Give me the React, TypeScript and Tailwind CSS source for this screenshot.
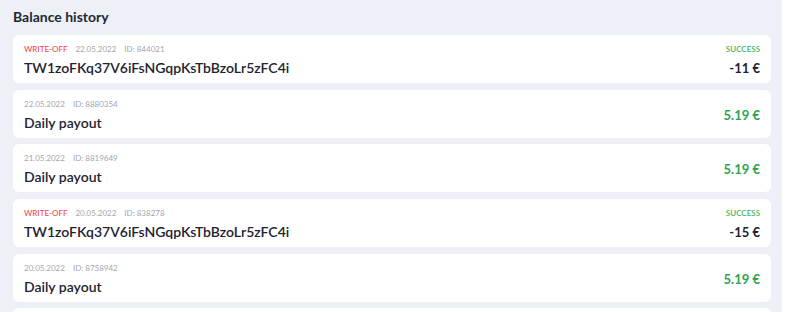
type Entry = {
  id: string
  date: string
  title: string
  amount: string
  writeOff?: boolean
}

const entries: Entry[] = [
  { id: '844021', date: '22.05.2022', title: 'TW1zoFKq37V6iFsNGqpKsTbBzoLr5zFC4i', amount: '-11 €', writeOff: true },
  { id: '8880354', date: '22.05.2022', title: 'Daily payout', amount: '5.19 €' },
  { id: '8819649', date: '21.05.2022', title: 'Daily payout', amount: '5.19 €' },
  { id: '838278', date: '20.05.2022', title: 'TW1zoFKq37V6iFsNGqpKsTbBzoLr5zFC4i', amount: '-15 €', writeOff: true },
  { id: '8758942', date: '20.05.2022', title: 'Daily payout', amount: '5.19 €' },
]

export default function App() {
  return (
    <div className="h-[312px] w-[787px] overflow-hidden bg-white font-['Lato','Noto_Sans',sans-serif]">
      <div className="h-full w-[782px] bg-[#edf0f7] px-[13px] pt-[8px]">
        {/* ── Header ── */}
        <h2 className="text-[14px] leading-[18px] font-bold text-[#222831]">Balance history</h2>

        {/* ── List ── */}
        <ul className="mt-[9px] flex w-[758px] flex-col gap-[6.7px]">
          {entries.map((e) => (
            <li key={e.id}>
              <HistoryRow entry={e} />
            </li>
          ))}
          {/* next row, scrolled below the fold */}
          <li className="h-[48px] rounded-[6px] bg-white" />
        </ul>
      </div>
    </div>
  )
}

function HistoryRow({ entry }: { entry: Entry }) {
  return (
    <div className="flex h-[48px] items-center justify-between rounded-[6px] bg-white px-[11px]">
      <div className="flex flex-col gap-[5px] pt-[3px]">
        <div className="flex items-center gap-[8px] text-[8px] leading-[10px]">
          {entry.writeOff && <span className="font-medium text-[#ef4a4a]">WRITE-OFF</span>}
          <span className="text-[#a3a6ad]">{entry.date}</span>
          <span className="text-[#a3a6ad]">ID: {entry.id}</span>
        </div>
        <div className="text-[14px] leading-[18px] font-semibold text-[#1e2330]">{entry.title}</div>
      </div>
      <div className="flex flex-col items-end gap-[6px] pt-[2px]">
        {entry.writeOff && (
          <span className="text-[8px] leading-[10px] font-semibold text-[#3fb35b]">SUCCESS</span>
        )}
        <span
          className={
            entry.writeOff
              ? 'text-[13px] leading-[16px] font-bold text-[#1e2330]'
              : 'text-[13px] leading-[16px] font-bold text-[#2ea44f]'
          }
        >
          {entry.amount}
        </span>
      </div>
    </div>
  )
}
